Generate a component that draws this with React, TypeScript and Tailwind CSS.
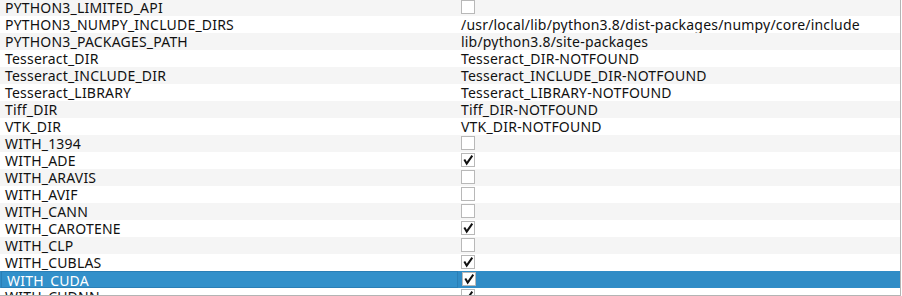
import React from "react";

type Row = { name: string; value?: string; check?: boolean };

const rows: Row[] = [
  { name: "PYTHON3_LIMITED_API", check: false },
  { name: "PYTHON3_NUMPY_INCLUDE_DIRS", value: "/usr/local/lib/python3.8/dist-packages/numpy/core/include" },
  { name: "PYTHON3_PACKAGES_PATH", value: "lib/python3.8/site-packages" },
  { name: "Tesseract_DIR", value: "Tesseract_DIR-NOTFOUND" },
  { name: "Tesseract_INCLUDE_DIR", value: "Tesseract_INCLUDE_DIR-NOTFOUND" },
  { name: "Tesseract_LIBRARY", value: "Tesseract_LIBRARY-NOTFOUND" },
  { name: "Tiff_DIR", value: "Tiff_DIR-NOTFOUND" },
  { name: "VTK_DIR", value: "VTK_DIR-NOTFOUND" },
  { name: "WITH_1394", check: false },
  { name: "WITH_ADE", check: true },
  { name: "WITH_ARAVIS", check: false },
  { name: "WITH_AVIF", check: false },
  { name: "WITH_CANN", check: false },
  { name: "WITH_CAROTENE", check: true },
  { name: "WITH_CLP", check: false },
  { name: "WITH_CUBLAS", check: true },
  { name: "WITH_CUDA", check: true },
  { name: "WITH_CUDNN", check: true },
];

function Box({ checked }: { checked: boolean }) {
  return (
    <div className="mt-[1px] ml-[4px] w-[14px] h-[14px] border border-[#b8b8b8] bg-white flex items-center justify-center">
      {checked && (
        <svg width="12" height="12" viewBox="0 0 12 12">
          <path d="M2.3 5.6 L4.7 9.6 L10.3 1.6" fill="none" stroke="#111" strokeWidth="2" strokeLinejoin="miter" />
        </svg>
      )}
    </div>
  );
}

export default function App() {
  return (
    <div
      className="w-[902px] h-[296px] bg-white tracking-[0.2px]"
      style={{ fontFamily: '"Noto Sans", "Open Sans", sans-serif' }}
    >
      <div className="w-[901px] h-[296px] border-r border-b border-[#b4b4b4] overflow-hidden">
        <div className="mt-[-1px] flex flex-col">
          {rows.map((r, i) => {
            const sel = r.name === "WITH_CUDA";
            const bg = sel ? "bg-[#308cc6]" : i % 2 === 0 ? "bg-[#f5f5f5]" : "bg-white";
            return (
              <div key={r.name} className={`flex h-[17px] shrink-0 overflow-hidden ${bg}`}>
                <div
                  className={`w-[457px] shrink-0 overflow-hidden pl-[5px] text-[14px] leading-[17px] whitespace-nowrap ${
                    sel ? "text-white bg-[#3290ca] border border-[#2a7fb6] ml-[1px] pl-[4px] leading-[15px]" : "text-[#111]"
                  }`}
                >
                  {r.name}
                </div>
                <div className="flex-1 overflow-hidden text-[14px] leading-[17px] whitespace-nowrap text-[#111]">
                  {r.check !== undefined ? <Box checked={r.check} /> : <span className="pl-[4px]">{r.value}</span>}
                </div>
              </div>
            );
          })}
        </div>
      </div>
    </div>
  );
}
